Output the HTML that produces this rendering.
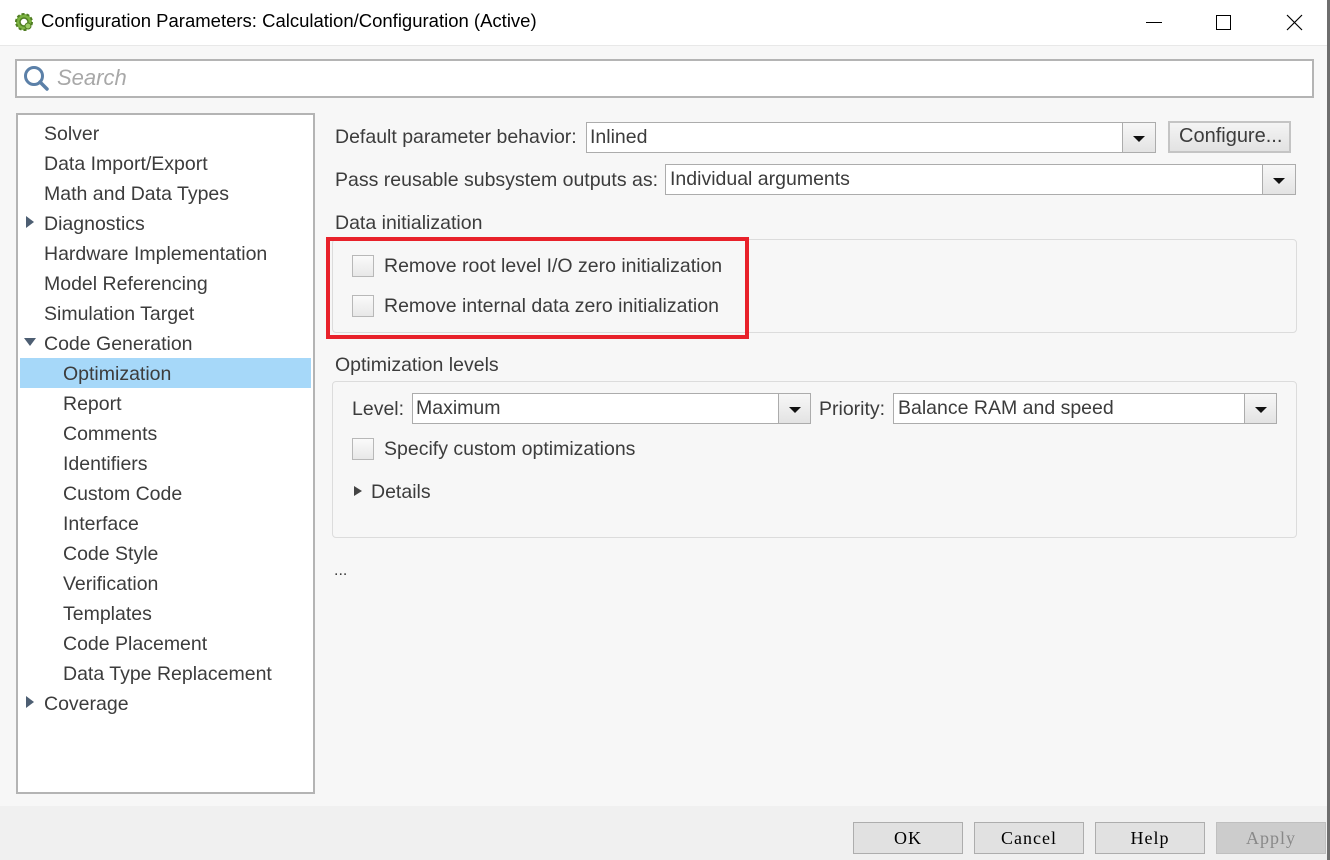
<!DOCTYPE html>
<html><head><meta charset="utf-8"><style>
*{margin:0;padding:0;box-sizing:border-box}
body{width:1330px;height:860px;overflow:hidden;background:#f7f7f7;font-family:"Liberation Sans",sans-serif;color:#3c3c3c;position:relative;font-size:19.5px}
.a{position:absolute;white-space:nowrap}
.title{left:0;top:0;width:1330px;height:45px;background:#fff}
.win{left:1327px;top:0;width:3px;height:860px;background:#6e6e6e}
.cb{width:22px;height:22px;border:1px solid #b8b8b8;background:linear-gradient(#fafafa,#e8e8e8)}
.sel{background:#fff;border:1px solid #acacac}
.dd{border:1px solid #acacac;background:linear-gradient(#f7f7f7,#e3e3e3)}
.dd:after{content:"";position:absolute;left:50%;top:50%;margin:-2px 0 0 -6px;border-left:6px solid transparent;border-right:6px solid transparent;border-top:6px solid #111}
.grp{border:1px solid #dcdcdc;border-radius:4px;background:#f7f7f7}
.btn{border:1px solid #adadad;background:#e1e1e1;font-family:"Liberation Serif","Noto Serif CJK SC",serif;font-size:18px;color:#000;text-align:center;line-height:30px;letter-spacing:1px}
</style></head><body>
<div class="a title"></div>
<svg class="a" style="left:13px;top:11px" width="22" height="22" viewBox="0 0 22 22"><circle cx="11" cy="11" r="8" fill="#7cb342" stroke="#4f7d22" stroke-width="2" stroke-dasharray="3 2"/><circle cx="11" cy="11" r="4" fill="#fff" stroke="#4f7d22" stroke-width="1.5"/><circle cx="15" cy="15" r="3" fill="#9ccc65" stroke="#4f7d22"/></svg>
<div class="a" style="left:41px;top:10px;font-size:18.5px;color:#000">Configuration Parameters: Calculation/Configuration (Active)</div>
<div class="a" style="left:1146px;top:22px;width:16px;height:1px;background:#000"></div>
<div class="a" style="left:1216px;top:15px;width:15px;height:15px;border:1px solid #000"></div>
<svg class="a" style="left:1286px;top:14px" width="17" height="17"><path d="M1 1L16 16M16 1L1 16" stroke="#000" stroke-width="1.2"/></svg>
<div class="a" style="left:0;top:45px;width:1330px;height:1px;background:#e8e8e8"></div>
<div class="a" style="left:0;top:806px;width:1330px;height:54px;background:#f0f0f0"></div>
<!-- search -->
<div class="a" style="left:15px;top:59px;width:1299px;height:39px;background:#fff;border:2px solid #b4b4b4"></div>
<svg class="a" style="left:22px;top:64px" width="28" height="30"><circle cx="12" cy="12" r="8.5" fill="none" stroke="#5b80a8" stroke-width="3"/><path d="M18 18L25 25" stroke="#5b80a8" stroke-width="3.5" stroke-linecap="round"/></svg>
<div class="a" style="left:57px;top:65px;font-size:22px;font-style:italic;color:#a8a8a8">Search</div>
<!-- tree -->
<div class="a" style="left:16px;top:113px;width:299px;height:681px;background:#fff;border:2px solid #b4b4b4"></div>
<div class="a" style="left:20px;top:358px;width:291px;height:30px;background:#a6d8f9"></div>
<div class="a" style="left:44px;top:119px;line-height:30px">Solver<br>Data Import/Export<br>Math and Data Types<br>Diagnostics<br>Hardware Implementation<br>Model Referencing<br>Simulation Target<br>Code Generation</div>
<div class="a" style="left:63px;top:359px;line-height:30px">Optimization<br>Report<br>Comments<br>Identifiers<br>Custom Code<br>Interface<br>Code Style<br>Verification<br>Templates<br>Code Placement<br>Data Type Replacement</div>
<div class="a" style="left:44px;top:689px;line-height:30px">Coverage</div>
<div class="a" style="left:26px;top:216px;border-top:6px solid transparent;border-bottom:6px solid transparent;border-left:8px solid #4d5e72"></div>
<div class="a" style="left:26px;top:696px;border-top:6px solid transparent;border-bottom:6px solid transparent;border-left:8px solid #4d5e72"></div>
<div class="a" style="left:24px;top:338px;border-left:6px solid transparent;border-right:6px solid transparent;border-top:8px solid #4d5e72"></div>
<!-- right -->
<div class="a" style="left:335px;top:126px">Default parameter behavior:</div>
<div class="a sel" style="left:586px;top:122px;width:537px;height:31px"></div>
<div class="a" style="left:590px;top:126px">Inlined</div>
<div class="a dd" style="left:1122px;top:122px;width:34px;height:31px"></div>
<div class="a" style="left:1168px;top:121px;width:123px;height:32px;border:2px solid #c4c4c4;background:linear-gradient(#f4f4f4,#e2e2e2)"></div>
<div class="a" style="left:1179px;top:125px;font-size:20px">Configure...</div>
<div class="a" style="left:335px;top:169px">Pass reusable subsystem outputs as:</div>
<div class="a sel" style="left:665px;top:164px;width:598px;height:31px"></div>
<div class="a" style="left:670px;top:168px">Individual arguments</div>
<div class="a dd" style="left:1262px;top:164px;width:34px;height:31px"></div>
<div class="a" style="left:335px;top:212px">Data initialization</div>
<div class="a grp" style="left:332px;top:239px;width:965px;height:94px"></div>
<div class="a cb" style="left:352px;top:255px"></div>
<div class="a" style="left:384px;top:255px">Remove root level I/O zero initialization</div>
<div class="a cb" style="left:352px;top:295px"></div>
<div class="a" style="left:384px;top:295px">Remove internal data zero initialization</div>
<div class="a" style="left:326px;top:237px;width:423px;height:102px;border:4px solid #e8212a"></div>
<div class="a" style="left:335px;top:354px">Optimization levels</div>
<div class="a grp" style="left:332px;top:381px;width:965px;height:157px"></div>
<div class="a" style="left:352px;top:398px">Level:</div>
<div class="a sel" style="left:412px;top:393px;width:367px;height:31px"></div>
<div class="a" style="left:416px;top:397px">Maximum</div>
<div class="a dd" style="left:778px;top:393px;width:33px;height:31px"></div>
<div class="a" style="left:819px;top:398px">Priority:</div>
<div class="a sel" style="left:893px;top:393px;width:352px;height:31px"></div>
<div class="a" style="left:898px;top:397px">Balance RAM and speed</div>
<div class="a dd" style="left:1244px;top:393px;width:33px;height:31px"></div>
<div class="a cb" style="left:352px;top:438px"></div>
<div class="a" style="left:384px;top:438px">Specify custom optimizations</div>
<div class="a" style="left:354px;top:486px;border-top:5px solid transparent;border-bottom:5px solid transparent;border-left:8px solid #444"></div>
<div class="a" style="left:371px;top:481px">Details</div>
<div class="a" style="left:334px;top:562px;font-size:16px">...</div>
<!-- buttons -->
<div class="a btn" style="left:853px;top:822px;width:110px;height:32px">OK</div>
<div class="a btn" style="left:974px;top:822px;width:110px;height:32px">Cancel</div>
<div class="a btn" style="left:1095px;top:822px;width:110px;height:32px">Help</div>
<div class="a btn" style="left:1216px;top:822px;width:110px;height:32px;background:#cccccc;border-color:#bfbfbf;color:#888">Apply</div>
<div class="a win"></div>
</body></html>
